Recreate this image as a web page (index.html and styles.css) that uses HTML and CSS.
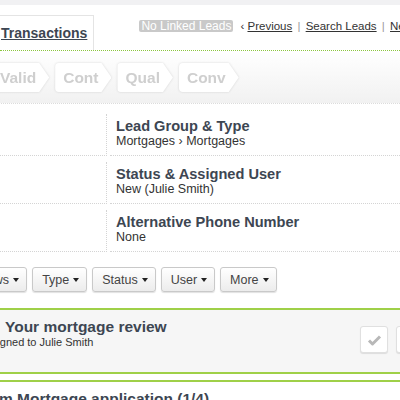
FILE: index.html
```html
<!DOCTYPE html>
<html lang="en">
  <head>
    <meta charset="UTF-8" />
    <meta name="viewport" content="width=device-width, initial-scale=1.0" />
    <title>Lead</title>
    <link rel="stylesheet" href="styles.css">
  </head>

  <body>
    <div class="topbar"></div>
    <header class="head">
      <div class="tab"><a href="#">Transactions</a></div>
      <nav class="nav">
        <span class="badge">No Linked Leads</span>
        <span class="links">
          &lsaquo; <a href="#">Previous</a>
          <span class="sep">|</span>
          <a href="#">Search Leads</a>
          <span class="sep">|</span>
          <a href="#">Next &rsaquo;</a>
        </span>
      </nav>
    </header>

    <section class="steps">
      <div class="step"><span>Valid</span></div>
      <div class="step"><span>Cont</span></div>
      <div class="step"><span>Qual</span></div>
      <div class="step"><span>Conv</span></div>
    </section>

    <section class="details">
      <div class="row">
        <div class="row-left"></div>
        <div class="row-right">
          <h4>Lead Group &amp; Type</h4>
          <p>Mortgages &rsaquo; Mortgages</p>
        </div>
      </div>
      <div class="row">
        <div class="row-left"></div>
        <div class="row-right">
          <h4>Status &amp; Assigned User</h4>
          <p>New (Julie Smith)</p>
        </div>
      </div>
      <div class="row">
        <div class="row-left"></div>
        <div class="row-right">
          <h4>Alternative Phone Number</h4>
          <p>None</p>
        </div>
      </div>
    </section>

    <section class="filters">
      <button class="btn">Views <i class="caret"></i></button>
      <button class="btn">Type <i class="caret"></i></button>
      <button class="btn">Status <i class="caret"></i></button>
      <button class="btn">User <i class="caret"></i></button>
      <button class="btn">More <i class="caret"></i></button>
    </section>

    <section class="task">
      <div class="task-body">
        <h3 class="task-title task-title--indent">Your mortgage review</h3>
        <p class="task-sub">Assigned to Julie Smith</p>
      </div>
      <div class="task-actions">
        <button class="act">
          <svg width="15" height="12" viewBox="0 0 15 12">
            <path d="M2 6.5 L5.5 10 L13 2.5" fill="none" stroke="#b8b8b8" stroke-width="3" stroke-linejoin="round" />
          </svg>
        </button>
        <button class="act"></button>
      </div>
    </section>

    <section class="task task--open">
      <div class="task-body">
        <h3 class="task-title">Form Mortgage application (1/4)</h3>
      </div>
    </section>
  </body>
</html>
```

FILE: styles.css
```css
body {
  margin: 0;
  width: 400px;
  height: 400px;
  overflow: hidden;
  background: #fff;
  color: #333;
  font-family: "Liberation Sans", Arial, sans-serif;
}
a {
  color: #333;
}
h3,
h4,
p {
  margin: 0;
}

.topbar {
  height: 5px;
  background: #f1f1f3;
}

/* header */
.head {
  display: flex;
  align-items: flex-start;
  height: 35px;
  margin-top: 10px;
  border-bottom: 1px dotted #8cc63f;
}
.tab {
  display: flex;
  align-items: center;
  height: 35px;
  box-sizing: border-box;
  margin-left: -10px;
  padding: 0 6px 0 10px;
  border: 1px solid #e4e4e4;
  border-bottom: 0;
}
.tab a {
  font-size: 14px;
  font-weight: bold;
  color: #3d4652;
}
.nav {
  display: flex;
  align-items: center;
  margin: 5px 0 0 45px;
  white-space: nowrap;
  font-size: 11.5px;
}
.badge {
  padding: 0 2px;
  line-height: 12px;
  border-radius: 2px;
  background: #c9c9c9;
  color: #fff;
  font-size: 12px;
}
.links {
  margin-left: 7px;
}
.sep {
  margin: 0 2px;
  color: #999;
}

/* progress steps */
.steps {
  display: flex;
  gap: 6px;
  margin-left: -8px;
  padding: 12px 0 11px;
  background: linear-gradient(#fff, #f1f1f1);
  border-bottom: 1px dotted #dcdcdc;
}
.step {
  filter: drop-shadow(0 0 1px rgba(0, 0, 0, 0.14));
}
.step span {
  display: block;
  height: 29px;
  line-height: 29px;
  padding: 0 13px 0 8px;
  border-radius: 4px 0 0 4px;
  background: #fff;
  clip-path: polygon(0 0, calc(100% - 10px) 0, 100% 50%, calc(100% - 10px) 100%, 0 100%);
  font-size: 15.5px;
  font-weight: bold;
  color: #cfcfcf;
}

/* details */
.details {
  padding-top: 4px;
}
.row {
  display: flex;
  height: 48px;
}
.row-left {
  width: 107px;
  box-sizing: border-box;
  padding-top: 6px;
  border-bottom: 1px dotted #d4d4d4;
}
.row-left::before {
  content: '';
  display: block;
  height: 40px;
  border-right: 1px dotted #d4d4d4;
}
.row-right {
  flex: 1;
  margin-left: 3px;
  padding: 10px 0 0 6px;
  border-bottom: 1px dotted #d4d4d4;
}
.row-right h4 {
  font-size: 14.6px;
  line-height: 17px;
  color: #3d4652;
}
.row-right p {
  font-size: 12.5px;
  line-height: 13px;
}

/* filter buttons */
.filters {
  display: flex;
  gap: 5px;
  margin: 15px 0 0 -34px;
}
.btn {
  display: flex;
  align-items: center;
  gap: 4px;
  height: 25px;
  padding: 0 7px 0 9px;
  border: 1px solid #c9c9c9;
  border-radius: 3px;
  background: linear-gradient(#fff, #ececec);
  box-shadow: 0 1px 1px rgba(0, 0, 0, 0.12);
  font-family: inherit;
  font-size: 12.5px;
  color: #444;
  white-space: nowrap;
}
.caret {
  width: 0;
  height: 0;
  border-left: 3.5px solid transparent;
  border-right: 3.5px solid transparent;
  border-top: 4px solid #222;
}

/* tasks */
.task {
  display: flex;
  align-items: center;
  height: 62px;
  margin-top: 16px;
  border-top: 2px solid #9fd048;
  border-bottom: 2px solid #9fd048;
  background: #f6f6f6;
}
.task--open {
  margin-top: 6px;
  background: #fff;
  border-bottom: 0;
}
.task-body {
  flex: 1;
  align-self: flex-start;
  margin-left: -26px;
  padding-top: 8px;
  white-space: nowrap;
}
.task-title {
  font-size: 15.5px;
  line-height: 18px;
  color: #3d4652;
}
.task-title--indent {
  padding-left: 31px;
}
.task-sub {
  padding-left: 5px;
  font-size: 11px;
  line-height: 13px;
}
.task-actions {
  display: flex;
  gap: 8px;
  margin: -3px -24px 0 0;
}
.act {
  display: flex;
  align-items: center;
  justify-content: center;
  width: 28px;
  height: 27px;
  padding: 0;
  border: 1px solid #e0e0e0;
  border-radius: 3px;
  background: #fff;
  box-shadow: 0 1px 1px rgba(0, 0, 0, 0.1);
}
```
